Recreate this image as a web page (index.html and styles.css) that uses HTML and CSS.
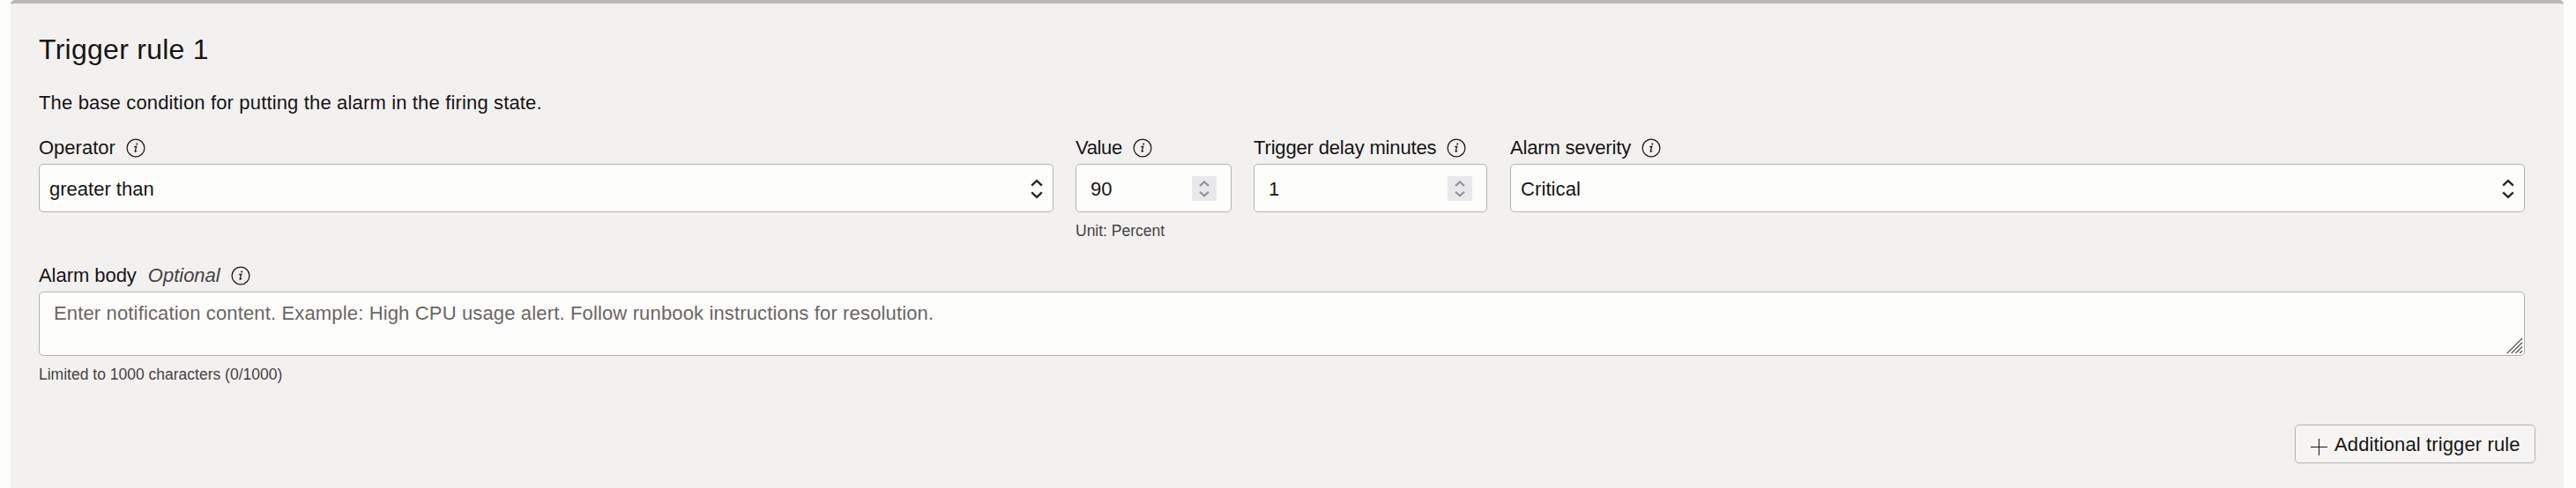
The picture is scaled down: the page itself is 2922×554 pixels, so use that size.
FILE: index.html
```html
<!DOCTYPE html>
<html lang="en">
<head>
<meta charset="utf-8">
<title>Trigger rule</title>
<link rel="stylesheet" href="styles.css">
</head>
<body>
<svg class="defs" width="0" height="0">
  <symbol id="info" viewBox="0 0 22 22">
    <circle cx="11" cy="11" r="9.900" fill="none" stroke="currentColor" stroke-width="1.250"/>
    <circle cx="12.200" cy="6.500" r="1" fill="currentColor"/>
    <path d="M9.200 9.700l2.500-.4-1.500 5.400c-.2.8.5.7 1.900-.6" fill="none" stroke="currentColor" stroke-width="1.250"/>
  </symbol>
  <symbol id="updown" viewBox="0 0 14 24">
    <path d="M1.200 8.600L7 3.200l5.800 5.400M1.200 16.400L7 21.800l5.800-5.400" fill="none" stroke="currentColor" stroke-width="2.500"/>
  </symbol>
</svg>
<main class="panel">
  <h2 class="title"><span>Trigger rule 1</span></h2>
  <p class="description"><span>The base condition for putting the alarm in the firing state.</span></p>
  <section class="fields">
    <div class="field">
      <div class="label"><span class="operator">Operator</span><svg class="info"><use href="#info"/></svg></div>
      <div class="control select"><span class="than">greater than</span><svg class="arrows"><use href="#updown"/></svg></div>
    </div>
    <div class="field">
      <div class="label"><span class="value">Value</span><svg class="info"><use href="#info"/></svg></div>
      <div class="control number"><span>90</span><i class="spinner"><svg class="arrows"><use href="#updown"/></svg></i></div>
      <div class="hint"><span class="unit">Unit: Percent</span></div>
    </div>
    <div class="field">
      <div class="label"><span class="delay">Trigger delay minutes</span><svg class="info"><use href="#info"/></svg></div>
      <div class="control number"><span>1</span><i class="spinner"><svg class="arrows"><use href="#updown"/></svg></i></div>
    </div>
    <div class="field last">
      <div class="label"><span class="severity">Alarm severity</span><svg class="info"><use href="#info"/></svg></div>
      <div class="control select"><span class="critical">Critical</span><svg class="arrows"><use href="#updown"/></svg></div>
    </div>
  </section>
  <section class="body-field">
    <div class="label"><span class="alarm-body">Alarm body</span><em class="optional">Optional</em><svg class="info"><use href="#info"/></svg></div>
    <div class="textarea"><span class="placeholder">Enter notification content. Example: High CPU usage alert. Follow runbook instructions for resolution.</span>
      <svg class="grip" viewBox="0 0 20 20"><path d="M1 19L19 1M6 19L19 6M11 19L19 11M16 19l3-3" stroke="#555" stroke-width="1.3"/></svg>
    </div>
    <div class="hint"><span class="limit">Limited to 1000 characters (0/1000)</span></div>
  </section>
  <footer class="actions">
    <button class="add"><svg class="plus" viewBox="0 0 19 19"><path d="M9.500 0v19M0 9.500h19" stroke="#161513" stroke-width="1"/></svg><span class="add-text">Additional trigger rule</span></button>
  </footer>
</main>
</body>
</html>
```
FILE: styles.css
```css
* { box-sizing: border-box; }
body {
  margin: 0;
  background: #fdfdfc;
  color: #161513;
  font: 22px/28px "Liberation Sans", Arial, sans-serif;
}
.defs { display: none; }
span, em { white-space: nowrap; }
.panel {
  height: 554px;
  margin: 0 14px 0 12px;
  padding: 32px 32px 0;
  border-top: 4px solid #bbb8b3;
  border-radius: 5px 5px 0 0;
  background: #f3f1f0;
}
.title { margin: 0; font-size: 32px; line-height: 40px; font-weight: 400; letter-spacing: .27px; }
.description { margin: 27px 0 0; line-height: 28px; height: 28px; letter-spacing: .155px; }
.fields {
  display: grid;
  grid-template-columns: 1151px 177px 265px 1152px;
  column-gap: 25px;
  height: 123px;
  margin-top: 23px;
}
.last { padding-left: 1px; }
.label { display: flex; align-items: center; height: 32px; padding-bottom: 4px; }
.info { width: 22px; height: 22px; margin-left: 12px; }
.value { letter-spacing: -.35px; }
.delay { letter-spacing: -.16px; }
.severity { letter-spacing: -.17px; }
.alarm-body { letter-spacing: -.05px; }
.critical { letter-spacing: .1px; }
.placeholder { letter-spacing: .148px; }
.add-text { letter-spacing: .12px; }
.control {
  display: flex;
  align-items: center;
  justify-content: space-between;
  height: 55px;
  border: 1px solid #b5b3af;
  border-radius: 5px;
  background: #fdfdfc;
}
.control > span { padding-top: 2px; }
.select { padding: 0 11px; }
.number { padding: 0 16px; }
.arrows { width: 14px; height: 24px; color: #2b2a28; }
.spinner {
  display: grid;
  place-items: center;
  width: 28px;
  height: 28px;
  background: #e8e7ea;
}
.spinner .arrows { width: 12px; height: 22px; color: #918f9d; }
.hint { margin-top: 9px; font-size: 17.500px; line-height: 24px; color: #44423f; }
.body-field { margin-right: 12px; height: 150px; padding-top: 22px; }
.optional { margin-left: 13px; color: #44423f; }
.textarea {
  display: flex;
  justify-content: space-between;
  height: 73px;
  padding: 10px 1px 1px 16px;
  border: 1px solid #b5b3af;
  border-radius: 5px;
  background: #fdfdfc;
  color: #6b6663;
}
.grip { width: 19px; height: 19px; align-self: flex-end; }
.actions { display: flex; justify-content: flex-end; margin-top: 55px; }
.add {
  display: flex;
  align-items: center;
  width: 273px;
  height: 44px;
  padding: 0 0 0 17px;
  border: 1px solid #b5b3af;
  border-radius: 5px;
  background: #f7f5f4;
  color: #161513;
  font: inherit;
}
.plus { width: 19px; height: 19px; margin: 6px 8px 0 0; }
.add-text { padding-top: 1px; }
```
